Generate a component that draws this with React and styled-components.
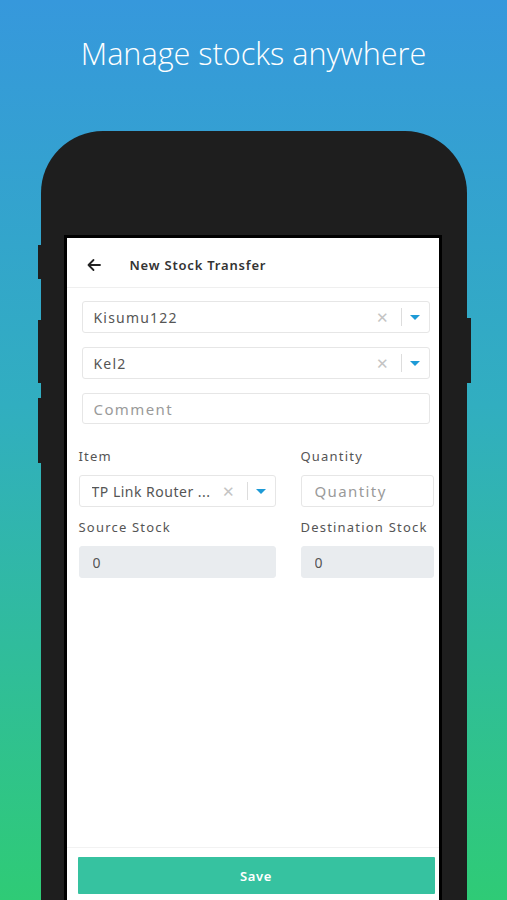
import React from 'react';
import styled, { createGlobalStyle } from 'styled-components';

const GlobalStyle = createGlobalStyle`
  html, body {
    margin: 0;
    padding: 0;
  }
  body {
    font-family: "Noto Sans", "Liberation Sans", sans-serif;
  }
`;

const Page = styled.div`
  align-items: center;
  background: linear-gradient(180deg, #3698dc 0%, #31aec0 45%, #2fcb76 100%);
  box-sizing: border-box;
  display: flex;
  flex-direction: column;
  height: 900px;
  overflow: hidden;
  width: 507px;
`;

const Headline = styled.h1`
  color: #fff;
  font-family: "Open Sans", sans-serif;
  font-size: 30.6px;
  font-weight: 300;
  line-height: 40px;
  margin: 33px 0 0;
`;

const Phone = styled.div`
  background: #1e1e1e;
  border-radius: 62px 62px 0 0;
  box-sizing: border-box;
  flex: none;
  height: 800px;
  margin-top: 58px;
  padding: 104px 25px 0 23px;
  position: relative;
  width: 426px;
`;

const SideKey = styled.span`
  background: #1e1e1e;
  height: ${p => p.$h}px;
  position: absolute;
  top: ${p => p.$top}px;
  width: 4px;
  ${p => (p.$right ? 'right: -4px;' : 'left: -3px;')}
`;

const Screen = styled.div`
  background: #fff;
  border: 3px solid #000;
  border-bottom: 0;
  display: flex;
  flex-direction: column;
  height: 662px;
`;

const Toolbar = styled.div`
  align-items: center;
  border-bottom: 1px solid #efefef;
  box-sizing: border-box;
  display: flex;
  height: 50px;
  padding: 4px 0 0 19px;
`;

const BackIcon = styled.svg`
  height: 16px;
  width: 16px;
`;

const Title = styled.div`
  color: #333;
  font-size: 13px;
  font-weight: 600;
  letter-spacing: 0.8px;
  margin-left: 28px;
`;

const Form = styled.div`
  display: flex;
  flex-direction: column;
  gap: 14px;
  padding: 13px 8px 0 15px;
`;

const InputBox = styled.div`
  align-items: center;
  background: ${p => (p.$disabled ? '#e9ecef' : '#fff')};
  border: 1px solid ${p => (p.$disabled ? '#e9ecef' : '#e6e6e6')};
  border-radius: 3px;
  box-sizing: border-box;
  display: flex;
  height: ${p => p.$h || 32}px;
  padding-left: ${p => p.$pl || 11}px;
  width: ${p => p.$w}px;
`;

const Value = styled.span`
  color: ${p => (p.$muted ? '#9a9a9a' : '#555')};
  flex: 1;
  font-size: ${p => (p.$muted ? 15 : 14)}px;
  letter-spacing: ${p => (p.$muted ? 1.4 : p.$tight ? 0.5 : 1.2)}px;
  min-width: 0;
  overflow: hidden;
  white-space: nowrap;
`;

const Clear = styled.span`
  color: #c4c4c4;
  font-size: 15px;
  line-height: 1;
  padding: 0 12px 0 6px;
`;

const Divider = styled.span`
  background: #ddd;
  flex: none;
  height: 18px;
  width: 1px;
`;

const Caret = styled.span`
  border-left: 5px solid transparent;
  border-right: 5px solid transparent;
  border-top: 5px solid #1d9ad6;
  margin: 0 9px 0 8px;
`;

const FieldGrid = styled.div`
  column-gap: 25px;
  display: grid;
  grid-template-columns: 197px 133px;
  padding: 24px 0 0 12px;
`;

const Field = styled.div`
  display: flex;
  flex-direction: column;
`;

const Label = styled.div`
  color: #555;
  font-size: 13px;
  letter-spacing: 1.2px;
  line-height: 16px;
  margin-bottom: 11px;
  margin-top: ${p => p.$mt || 0}px;
`;

const Spacer = styled.div`
  flex: 1;
`;

const Footer = styled.div`
  border-top: 1px solid #f2f2f2;
  box-sizing: border-box;
  height: 53px;
  padding: 9px 4px 0 11px;
`;

const SaveButton = styled.button`
  background: #36c2a0;
  border: 0;
  border-radius: 1px;
  color: #fff;
  font-family: inherit;
  font-size: 13px;
  font-weight: 600;
  height: 37px;
  letter-spacing: 0.6px;
  width: 357px;
`;

function Select({ value, width, pl, tight }) {
  return (
    <InputBox $w={width} $pl={pl}>
      <Value $tight={tight}>{value}</Value>
      <Clear>✕</Clear>
      <Divider />
      <Caret />
    </InputBox>
  );
}

export default function App() {
  return (
    <Page>
      <GlobalStyle />
      <Headline>Manage stocks anywhere</Headline>
      <Phone>
        <SideKey $top={114} $h={34} />
        <SideKey $top={189} $h={63} />
        <SideKey $top={267} $h={65} />
        <SideKey $right $top={187} $h={65} />
        <Screen>
          <Toolbar>
            <BackIcon viewBox="0 0 16 16" fill="none" stroke="#222" strokeWidth="1.8" strokeLinecap="round" strokeLinejoin="round">
              <path d="M14 8H2.5M7.5 3L2.5 8l5 5" />
            </BackIcon>
            <Title>New Stock Transfer</Title>
          </Toolbar>
          <Form>
            <Select value="Kisumu122" width={348} />
            <Select value="Kel2" width={348} />
            <InputBox $w={348} $h={31}>
              <Value $muted>Comment</Value>
            </InputBox>
          </Form>
          <FieldGrid>
            <Field>
              <Label>Item</Label>
              <Select value="TP Link Router ..." width={197} pl={12} tight />
            </Field>
            <Field>
              <Label>Quantity</Label>
              <InputBox $w={133} $pl={13}>
                <Value $muted>Quantity</Value>
              </InputBox>
            </Field>
            <Field>
              <Label $mt={12}>Source Stock</Label>
              <InputBox $disabled $w={197} $pl={13}>
                <Value>0</Value>
              </InputBox>
            </Field>
            <Field>
              <Label $mt={12}>Destination Stock</Label>
              <InputBox $disabled $w={133} $pl={13}>
                <Value>0</Value>
              </InputBox>
            </Field>
          </FieldGrid>
          <Spacer />
          <Footer>
            <SaveButton>Save</SaveButton>
          </Footer>
        </Screen>
      </Phone>
    </Page>
  );
}
